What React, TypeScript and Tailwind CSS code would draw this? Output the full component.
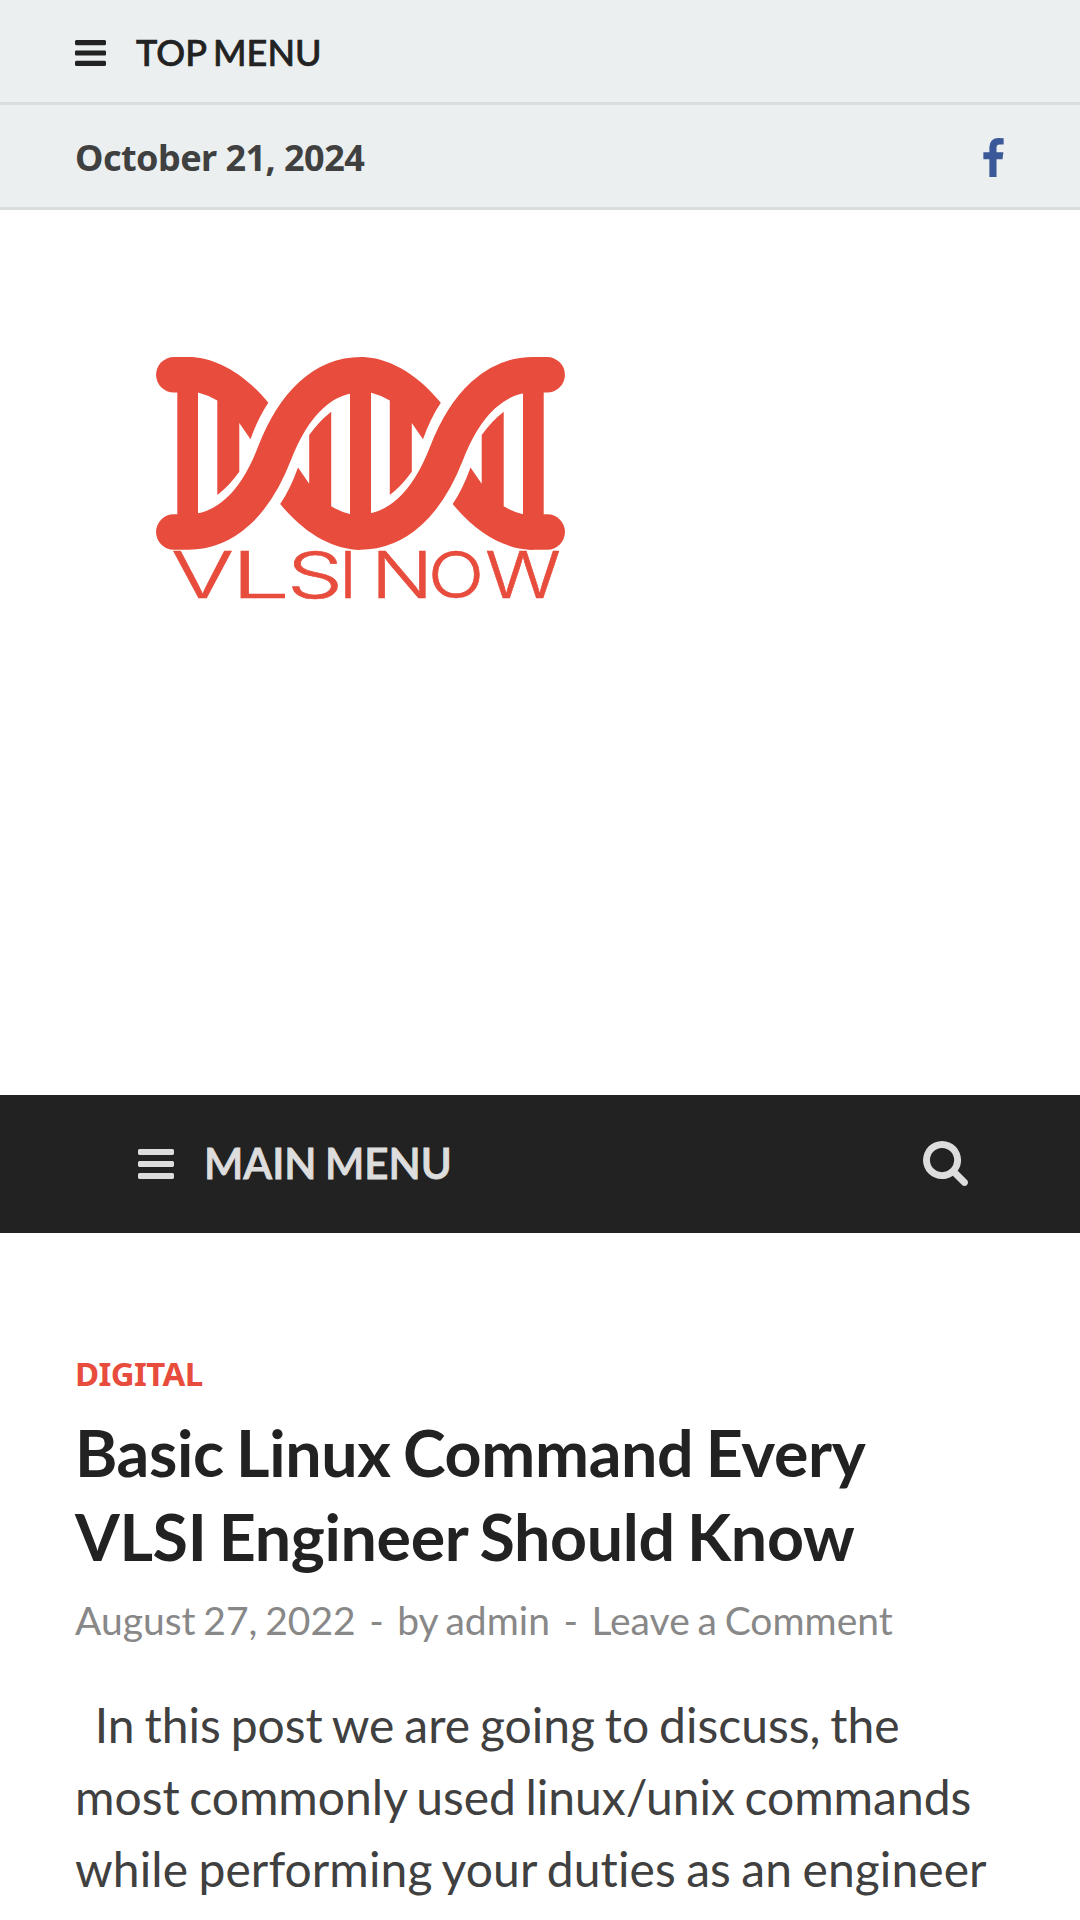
const BARS =
  "M1664 1344v128q0 26-19 45t-45 19h-1408q-26 0-45-19t-19-45v-128q0-26 19-45t45-19h1408q26 0 45 19t19 45zm0-512v128q0 26-19 45t-45 19h-1408q-26 0-45-19t-19-45v-128q0-26 19-45t45-19h1408q26 0 45 19t19 45zm0-512v128q0 26-19 45t-45 19h-1408q-26 0-45-19t-19-45v-128q0-26 19-45t45-19h1408q26 0 45 19t19 45z";
const SEARCH =
  "M1216 832q0-185-131.5-316.5t-316.5-131.5-316.5 131.5-131.5 316.5 131.5 316.5 316.5 131.5 316.5-131.5 131.5-316.5zm512 832q0 52-38 90t-90 38q-54 0-90-38l-343-342q-179 124-399 124-143 0-273.5-55.5t-225-150-150-225-55.5-273.5 55.5-273.5 150-225 225-150 273.5-55.5 273.5 55.5 225 150 150 225 55.5 273.5q0 220-124 399l343 343q37 37 37 90z";
const FACEBOOK =
  "M1343 12v264h-157q-86 0-116 36t-30 108v189h293l-39 296h-254v759h-306v-759h-255v-296h255v-218q0-186 104-288.5t277-102.5q147 0 228 12z";

interface IconProps {
  d: string;
  viewBox: string;
  className?: string;
}

const Icon = ({ d, viewBox, className }: IconProps) => (
  <svg viewBox={viewBox} className={className} fill="currentColor">
    <path d={d} />
  </svg>
);

// left edge and width of each letter in the wordmark
const letters: [string, number, number][] = [
  ["V", 171, 63],
  ["L", 231, 59],
  ["S", 287, 56],
  ["I", 339, 18],
  ["N", 371, 62],
  ["O", 428, 56],
  ["W", 485, 76],
];

// One half of the helix, the other half is the same shape turned by 180deg
const HelixHalf = () => {
  const back =
    "M188 357C214 357 243 372 268.3 402.7Q258 418 250.5 439.3L239.3 423V471.7Q229 486 217.3 495V400.5Q208 395 198 392.5H188Z";
  return (
    <g>
      <path d="M173.8 374.8H189" stroke="currentColor" strokeWidth="35.5" strokeLinecap="round" />
      <path d={back} />
      <path d={back} transform="translate(172.5 0)" />
      <path
        d="M173.8 532H188C225 532 255 504 274.5 453.4S324 374.8 361 374.8"
        fill="none"
        stroke="currentColor"
        strokeWidth="35.5"
        strokeLinecap="round"
      />
    </g>
  );
};

const Logo = () => (
  <svg
    viewBox="150 350 430 280"
    className="block h-[280px] w-[430px] text-[#e74c3c]"
    fill="currentColor"
  >
    <HelixHalf />
    <g transform="rotate(180 360.5 453.4)">
      <HelixHalf />
    </g>
    <rect x="177.3" y="380" width="20.7" height="147" />
    <rect x="350" y="380" width="21" height="147" />
    <rect x="523" y="380" width="20.7" height="147" />
    <text
      y="598"
      fontSize="64"
      stroke="currentColor"
      strokeWidth="0.6"
      className="font-['Inter',sans-serif] font-light"
    >
      {letters.map(([letter, x, width]) => (
        <tspan key={letter} x={x} textLength={width} lengthAdjust="spacingAndGlyphs">
          {letter}
        </tspan>
      ))}
    </text>
  </svg>
);

const TopBar = () => (
  <div className="bg-[#ebeff0]">
    <div className="flex h-[105px] items-center border-b-3 border-[#d9dddd] px-[75px] pt-[3px] text-[#222222]">
      <Icon d={BARS} viewBox="128 256 1536 1280" className="h-[26px] w-[31px]" />
      <span className="mb-[2px] ml-[30px] text-[36px] leading-none font-medium [word-spacing:-2px] [-webkit-text-stroke:0.7px]">
        TOP MENU
      </span>
    </div>
    <div className="flex h-[105px] items-center justify-between border-b-3 border-[#d9dddd] px-[75px] pt-1">
      <span className="font-['Noto_Sans',sans-serif] text-[36px] leading-none font-bold tracking-[-0.55px] text-[#404040]">
        October 21, 2024
      </span>
      <Icon d={FACEBOOK} viewBox="479 0 864 1664" className="mr-px mb-[2px] h-[39px] w-[21px] text-[#3b5998]" />
    </div>
  </div>
);

const MainNav = () => (
  <nav className="flex h-[138px] items-center bg-[#222222] pr-[112px] pb-[2px] pl-[138px] text-[#dddddd]">
    <Icon d={BARS} viewBox="128 256 1536 1280" className="mt-px h-[30px] w-[36px]" />
    <span className="ml-[30px] text-[42px] leading-none font-semibold [word-spacing:-2px] [-webkit-text-stroke:0.9px]">
      MAIN MENU
    </span>
    <Icon d={SEARCH} viewBox="64 128 1664 1664" className="ml-auto size-[45px]" />
  </nav>
);

const Post = () => (
  <article className="px-[75px] pt-[117px]">
    <div className="font-['Noto_Sans',sans-serif] text-[33px] leading-[48px] font-bold tracking-[-0.6px] text-[#e74c3c]">
      DIGITAL
    </div>
    <h1 className="mt-3 text-[64.5px] leading-[84px] font-bold tracking-[-0.35px] text-[#222222] [word-spacing:-3px]">
      Basic Linux Command Every
      <br />
      VLSI Engineer Should Know
    </h1>
    <div className="mt-[12px] flex text-[39px] leading-[60px] whitespace-pre text-[#888888] [word-spacing:-2.2px]">
      <span>August 27, 2022</span>
      <span className="mx-[13.5px]">-</span>
      <span>by admin</span>
      <span className="mx-[13.5px]">-</span>
      <span>Leave a Comment</span>
    </div>
    <p className="mt-[39px] flex flex-col text-[48px] leading-[72px] whitespace-pre text-[#404040] [font-variant-ligatures:none]">
      <span className="[word-spacing:-2.4px]">{"\u00a0 In this post we are going to discuss, the"}</span>
      <span className="[word-spacing:-2.8px]">
        most commonly used linux<span className="tracking-[-1.5px]">/</span>unix commands
      </span>
      <span className="tracking-[0.08px] [word-spacing:-2px]">while performing your duties as an engineer</span>
    </p>
  </article>
);

const App = () => {
  return (
    <div className="h-[1920px] w-[1080px] overflow-hidden bg-white font-['Lato',sans-serif]">
      <TopBar />
      {/* Branding */}
      <header className="h-[885px] pt-[140px] pl-[150px]">
        <Logo />
      </header>
      <MainNav />
      <Post />
    </div>
  );
};

export default App;
